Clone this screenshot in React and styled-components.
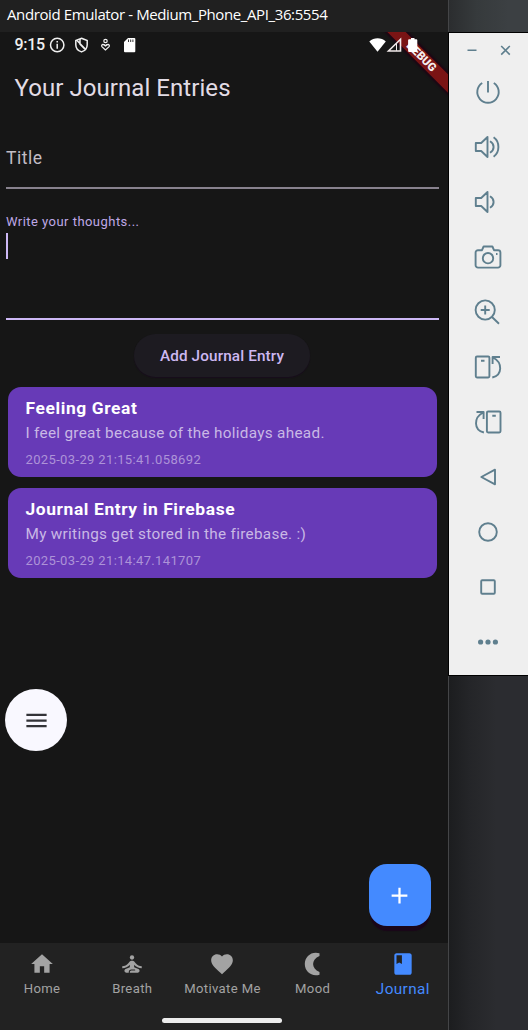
import React from "react";
import styled, { createGlobalStyle } from "styled-components";
import { MdHome, MdSelfImprovement, MdFavorite, MdBook, MdMenu, MdAdd } from "react-icons/md";

const GlobalStyle = createGlobalStyle`
  *, *::before, *::after { box-sizing: border-box; }
  body { margin: 0; background: #2b2c30; font-family: Roboto, "Liberation Sans", sans-serif; }
`;

const Desktop = styled.div`
  display: flex;
  width: 528px;
  height: 1030px;
  overflow: hidden;
`;

const EmulatorWindow = styled.section`
  display: flex;
  flex-direction: column;
  width: 449px;
  flex: none;
  border-right: 1px solid #444547;
  background: #161616;
`;

const WindowTitle = styled.header`
  height: 32px;
  flex: none;
  padding: 0 0 5px 7px;
  display: flex;
  align-items: center;
  background: #202020;
  color: #fff;
  font-family: "Open Sans", "Noto Sans", sans-serif;
  font-size: 15px;
  letter-spacing: -0.39px;
  white-space: nowrap;
`;

const Phone = styled.main`
  position: relative;
  display: flex;
  flex-direction: column;
  flex: 1;
  overflow: hidden;
`;

const StatusBar = styled.div`
  display: flex;
  align-items: center;
  height: 25px;
  padding: 0 30.5px 0 14.5px;
  color: #f0f0f0;
`;

const Clock = styled.span`
  width: 34.5px;
  font-size: 16px;
  font-weight: 500;
  letter-spacing: -0.3px;
  white-space: nowrap;
`;

const StatusGlyphs = styled.svg`
  position: relative;
  z-index: 2;
  display: block;
  margin-left: ${(p) => (p.$end ? "auto" : 0)};
`;

const DebugBanner = styled.div`
  position: absolute;
  top: 19px;
  left: 362px;
  width: 120px;
  height: 13px;
  padding-right: 2px;
  transform: rotate(45deg);
  background: #7a1414;
  box-shadow: 0 0 2px 2px #1c0614;
  color: #f5eeee;
  font-size: 11.5px;
  font-weight: 900;
  line-height: 13px;
  text-align: center;
`;

const PageTitle = styled.h1`
  margin: 0;
  padding: 0 14.5px;
  height: 62px;
  line-height: 62px;
  color: #e2dce5;
  font-size: 24px;
  font-weight: 400;
  letter-spacing: 0.06px;
`;

const Form = styled.form`
  display: flex;
  flex-direction: column;
  margin: 0 9.5px 0 5.5px;
`;

const Field = styled.div`
  height: ${(p) => p.$height}px;
  padding-top: ${(p) => p.$top}px;
  border-bottom: 2px solid ${(p) => p.$line};
`;

const FieldLabel = styled.label`
  display: block;
  padding-left: 0.5px;
  color: ${(p) => (p.$active ? "#bfa8e6" : "#c2bdc5")};
  font-size: ${(p) => (p.$active ? 13 : 17.5)}px;
  line-height: 20px;
  letter-spacing: ${(p) => (p.$active ? 0.46 : 0.5)}px;
`;

const Caret = styled.div`
  width: 2px;
  height: 26px;
  margin-top: 1px;
  background: #cdb8f5;
`;

const AddEntryButton = styled.button`
  align-self: center;
  width: 176px;
  height: 43px;
  margin: 14px 0 10px;
  border: 0;
  border-radius: 22px;
  background: #1d1b21;
  box-shadow: 0 1px 1px #180d1c;
  color: #cdb8f2;
  font-family: inherit;
  font-size: 15.3px;
  font-weight: 500;
  letter-spacing: 0.13px;
  white-space: nowrap;
`;

const EntryList = styled.div`
  display: flex;
  flex-direction: column;
  gap: 11px;
  margin: 0 11px 0 7.5px;
`;

const EntryCard = styled.article`
  height: 90px;
  padding: 10px 18px;
  border-radius: 13px;
  background: #673ab7;
  white-space: nowrap;
`;

const EntryTitle = styled.h2`
  margin: 0;
  color: #fff;
  font-size: 17.4px;
  font-weight: 700;
  line-height: 23px;
  letter-spacing: 0.61px;
`;

const EntryText = styled.p`
  margin: 0;
  color: #c9b8e5;
  font-size: 15.3px;
  line-height: 27px;
  letter-spacing: 0.3px;
`;

const EntryDate = styled.time`
  display: block;
  color: #ad93d8;
  font-size: 13px;
  line-height: 25px;
  letter-spacing: 0.36px;
`;

const MenuButton = styled.button`
  position: absolute;
  left: 5.4px;
  top: 657px;
  display: grid;
  place-items: center;
  width: 62px;
  height: 62px;
  padding: 0;
  border: 0;
  border-radius: 50%;
  background: #f9f8ff;
  color: #333338;
`;

const CreateButton = styled.button`
  position: absolute;
  left: 368.6px;
  top: 832px;
  display: grid;
  place-items: center;
  width: 62px;
  height: 62px;
  padding: 0;
  border: 0;
  border-radius: 18px;
  background: #448aff;
  color: #fff;
  box-shadow: 0 6px 1px -1px #1a0619;
`;

const BottomBar = styled.footer`
  display: flex;
  flex-direction: column;
  align-items: center;
  height: 87px;
  margin-top: auto;
  background: #222222;
`;

const Tabs = styled.nav`
  display: flex;
  align-self: flex-start;
  margin-left: -3px;
  height: 74px;
`;

const Tab = styled.div`
  display: flex;
  flex-direction: column;
  align-items: center;
  width: 90.2px;
  padding-top: 8px;
  color: ${(p) => (p.$active ? "#448aff" : "#a3a3a3")};
  font-size: ${(p) => (p.$active ? 15.3 : 13.1)}px;
  letter-spacing: ${(p) => (p.$active ? 0.4 : 0.36)}px;
  line-height: 24px;
  white-space: nowrap;

  svg { display: block; flex: none; }
`;

const HomeIndicator = styled.div`
  width: 120px;
  height: 5px;
  margin: 0.5px 4px 0 0;
  border-radius: 3px;
  background: #ececec;
`;

const Side = styled.aside`
  display: flex;
  flex-direction: column;
  width: 79px;
  flex: none;
`;

const Backdrop = styled.div`
  height: ${(p) => (p.$lower ? "auto" : "32px")};
  flex: ${(p) => (p.$lower ? 1 : "none")};
  background: ${(p) =>
    p.$lower
      ? "linear-gradient(90deg, #1c1d1f, #242528 25%, #2b2c30 60%)"
      : "linear-gradient(90deg, #2b2d2f, #363a3c 35%, #3c4043 75%)"};
`;

const Toolbar = styled.div`
  height: 644px;
  flex: none;
  margin-left: -1px;
  border: 1px solid #000;
  border-right: 0;
  background: #efefef;
`;

const ToolbarIcon = styled.svg`
  display: block;
  margin: ${(p) => (p.$top ? "0" : "25px 0 0 24px")};
  fill: none;
  stroke: #5f7f8e;
  stroke-width: ${(p) => (p.$top ? 1.6 : 1.9)};
  stroke-linejoin: round;
`;

const ToolList = styled.div`
  display: flex;
  flex-direction: column;
  margin-top: -16.5px;
`;

const tools = {
  power: <path d="M9.2 6A10.7 10.7 0 1 0 20.8 6M15 4v11.5" />,
  volumeUp: (
    <path d="M2.8 11h5.4l6.3-6v20l-6.3-6H2.8zM17 9.3c4.8 2.8 4.8 8.6 0 11.4M20.6 5.3c6.4 4.5 6.4 14.9 0 19.4" />
  ),
  volumeDown: <path d="M2.8 11h5.4l6.3-6v20l-6.3-6H2.8zM17 9.3c4.8 2.8 4.8 8.6 0 11.4" />,
  camera: (
    <>
      <path d="M5 8.2h4l1.6-3.7h8.8L21 8.2h4a2.4 2.4 0 0 1 2.4 2.4v12.6a2.4 2.4 0 0 1-2.4 2.4H5a2.4 2.4 0 0 1-2.4-2.4V10.6A2.4 2.4 0 0 1 5 8.2z" />
      <circle cx="15" cy="16.2" r="5.2" />
      <path d="M23 12h1.5" />
    </>
  ),
  zoom: (
    <>
      <circle cx="12.2" cy="13" r="9.6" />
      <path d="M19 20l7 6.7M7.7 13h9M12.2 8.5v9" />
    </>
  ),
  rotateLeft: (
    <>
      <rect x="2.8" y="4.5" width="13.6" height="21" rx="1.2" />
      <path d="M8 8.7h3.5M19.6 12V5H27M20 5.5c9.7 5 9.7 17.5-.7 20" />
    </>
  ),
  rotateRight: (
    <>
      <rect x="13.9" y="4.5" width="13.6" height="21" rx="1.2" />
      <path d="M19.3 8.7h3.5M10.6 12V5H3.5M10.2 5.5c-9.7 5-9.7 17.5.7 20" />
    </>
  ),
  back: <path d="M8.3 15L22 7.7v14.6z" />,
  home: <circle cx="15" cy="15" r="8.8" />,
  overview: <rect x="8.2" y="8.2" width="13.6" height="13.6" rx="1" />,
  more: (
    <g fill="#5f7f8e" stroke="none">
      <circle cx="7.6" cy="15" r="2.6" />
      <circle cx="15" cy="15" r="2.6" />
      <circle cx="22.4" cy="15" r="2.6" />
    </g>
  ),
};

const entries = [
  {
    title: "Feeling Great",
    text: "I feel great because of the holidays ahead.",
    date: "2025-03-29 21:15:41.058692",
  },
  {
    title: "Journal Entry in Firebase",
    text: "My writings get stored in the firebase. :)",
    date: "2025-03-29 21:14:47.141707",
  },
];

const Moon = () => (
  <svg width="26" height="26" viewBox="0 0 26 26" fill="currentColor">
    <path d="M19.500 2.300V5C11 8.500 11 17.500 19.500 21v2.700C11.500 26 4.800 20.500 4.800 13S11.500 0 19.500 2.300z" />
  </svg>
);

const tabs = [
  { label: "Home", icon: <MdHome size={26} /> },
  { label: "Breath", icon: <MdSelfImprovement size={26} /> },
  { label: "Motivate Me", icon: <MdFavorite size={26} /> },
  { label: "Mood", icon: <Moon /> },
  { label: "Journal", icon: <MdBook size={26} />, active: true },
];

export default function App() {
  return (
    <>
      <GlobalStyle />
      <Desktop>
        <EmulatorWindow>
          <WindowTitle>Android Emulator - Medium_Phone_API_36:5554</WindowTitle>
          <Phone>
            <StatusBar>
              <Clock>9:15</Clock>
              <StatusGlyphs width="90" height="18" viewBox="0 0 90 18" fill="none" stroke="#f0f0f0" strokeWidth="1.5">
                <circle cx="8.2" cy="9" r="6.7" />
                <path d="M8.2 7.8v5M8.2 5v1.5" />
                <path d="M32.5 2.3l5.700 2.200v4.200c0 3.500-2.300 6-5.700 7.200-3.400-1.200-5.700-3.700-5.700-7.200V4.500z" />
                <path d="M28 4.500l8.500 8.700M31 3v5.200l4.500 4.500" />
                <circle cx="56.5" cy="5" r="1.7" strokeWidth="1.2" />
                <path d="M56.5 14l-3.6-3.400c-1-1.500 1-3.400 3.600-.9 2.600-2.500 4.600-.6 3.600.9zM53.500 8l3 2 3-2" strokeWidth="1.2" />
                <path d="M79 2h6.300a1 1 0 0 1 1 1v12.300a1 1 0 0 1-1 1h-9.300a1 1 0 0 1-1-1V6z" fill="#fff" stroke="none" />
                <path d="M79.500 3.500V6M81.700 3.500V6M83.900 3.500V6" stroke="#333" strokeWidth="1" />
              </StatusGlyphs>
              <StatusGlyphs $end width="49" height="18" viewBox="0 0 49 18" fill="#fff">
                <path d="M.3 5.500C5 1.200 12.300 1.200 16.800 5.500L8.500 15.700z" />
                <path d="M31.500 3.300v11.700H19.500z" fill="none" stroke="#f2eaea" strokeWidth="1.6" />
                <path d="M27.500 7.500v7.300" stroke="#f2eaea" strokeWidth="1" />
                <path d="M42 2h3.500v1.300h1.800a1 1 0 0 1 1 1V15a1 1 0 0 1-1 1h-7.200a1 1 0 0 1-1-1V4.300a1 1 0 0 1 1-1H42z" />
              </StatusGlyphs>
            </StatusBar>
            <DebugBanner>DEBUG</DebugBanner>
            <PageTitle>Your Journal Entries</PageTitle>
            <Form>
              <Field $height={70} $top={29} $line="#88828e">
                <FieldLabel>Title</FieldLabel>
              </Field>
              <Field $height={131} $top={23} $line="#cdb8f5">
                <FieldLabel $active>Write your thoughts...</FieldLabel>
                <Caret />
              </Field>
              <AddEntryButton type="button">Add Journal Entry</AddEntryButton>
            </Form>
            <EntryList>
              {entries.map((e) => (
                <EntryCard key={e.title}>
                  <EntryTitle>{e.title}</EntryTitle>
                  <EntryText>{e.text}</EntryText>
                  <EntryDate>{e.date}</EntryDate>
                </EntryCard>
              ))}
            </EntryList>
            <MenuButton aria-label="Menu"><MdMenu size={27} /></MenuButton>
            <CreateButton aria-label="Create"><MdAdd size={27} /></CreateButton>
            <BottomBar>
              <Tabs>
                {tabs.map((t) => (
                  <Tab key={t.label} $active={t.active}>
                    {t.icon}
                    <span>{t.label}</span>
                  </Tab>
                ))}
              </Tabs>
              <HomeIndicator />
            </BottomBar>
          </Phone>
        </EmulatorWindow>
        <Side>
          <Backdrop />
          <Toolbar>
            <ToolbarIcon $top width="79" height="35" viewBox="0 0 79 35">
              <path d="M18.5 17.2h9M52.2 13l8.600 8.600M60.800 13l-8.600 8.600" />
            </ToolbarIcon>
            <ToolList>
              {Object.entries(tools).map(([name, shape]) => (
                <ToolbarIcon key={name} width="30" height="30" viewBox="0 0 30 30">
                  {shape}
                </ToolbarIcon>
              ))}
            </ToolList>
          </Toolbar>
          <Backdrop $lower />
        </Side>
      </Desktop>
    </>
  );
}
